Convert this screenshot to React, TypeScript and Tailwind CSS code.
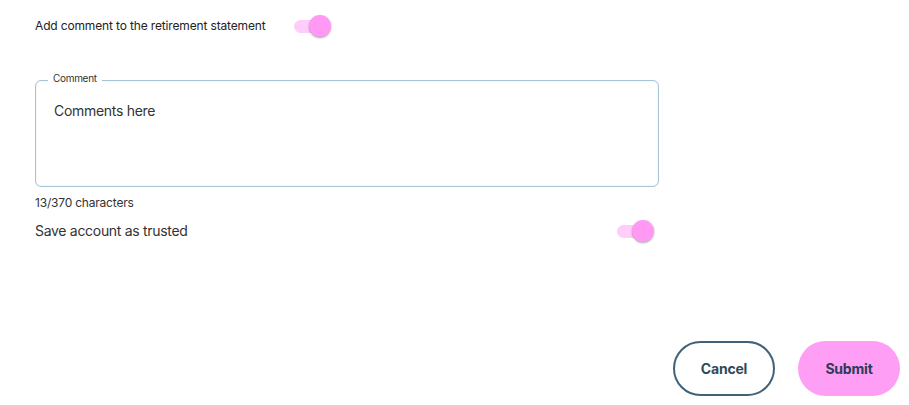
import React from "react";

function Toggle() {
  return (
    <div className="relative w-[37px] h-[23px] flex items-center">
      <div className="w-[30px] h-[13px] rounded-full bg-[#ffcdfa]" />
      <div className="absolute right-0 top-0 w-[22px] h-[22px] rounded-full bg-[#ff99f4] shadow-[0_1px_2px_rgba(0,0,0,0.35)]" />
    </div>
  );
}

export default function App() {
  return (
    <div
      className="w-[909px] h-[405px] bg-white flex flex-col text-[#222]"
      style={{ fontFamily: "Inter, 'Liberation Sans', sans-serif" }}
    >
      <div className="pl-[35px] pt-[14px] flex items-center">
        <span className="text-[12px] leading-[24px] tracking-[-0.15px] w-[259px]">
          Add comment to the retirement statement
        </span>
        <Toggle />
      </div>

      <div className="ml-[35px] mt-[42px] relative w-[624px] h-[107px] border-[1.5px] border-[#a9c3d6] rounded-[6px] shadow-[inset_0_0_2px_rgba(169,195,214,0.4)]">
        <span className="absolute -top-[9px] left-[12px] px-[5px] bg-white text-[10px] leading-[12px] tracking-[-0.3px] text-[#333]">
          Comment
        </span>
        <div className="pl-[18px] pt-[21px] text-[14px] leading-[18px] tracking-[-0.3px] text-[#333]">
          Comments here
        </div>
      </div>

      <div className="pl-[35px] mt-[9px] text-[12px] leading-[14px] tracking-[-0.2px] text-[#333]">
        13/370 characters
      </div>

      <div className="pl-[35px] mt-[11px] w-[656px] flex items-start justify-between">
        <span className="text-[14px] leading-[20px] tracking-[-0.3px] text-[#333]">
          Save account as trusted
        </span>
        <div className="mt-[-1px] mr-[2px]">
          <Toggle />
        </div>
      </div>

      <div className="mt-[98px] pr-[9px] flex justify-end gap-[23px]">
        <button className="w-[102px] h-[55px] rounded-full border-2 border-[#3f6278] bg-white text-[14px] font-bold text-[#2f4a5e] tracking-[-0.2px]">
          Cancel
        </button>
        <button className="w-[102px] h-[55px] rounded-full bg-[#ff9ef5] text-[14px] font-bold text-[#2b3a55] tracking-[-0.2px]">
          Submit
        </button>
      </div>
    </div>
  );
}
